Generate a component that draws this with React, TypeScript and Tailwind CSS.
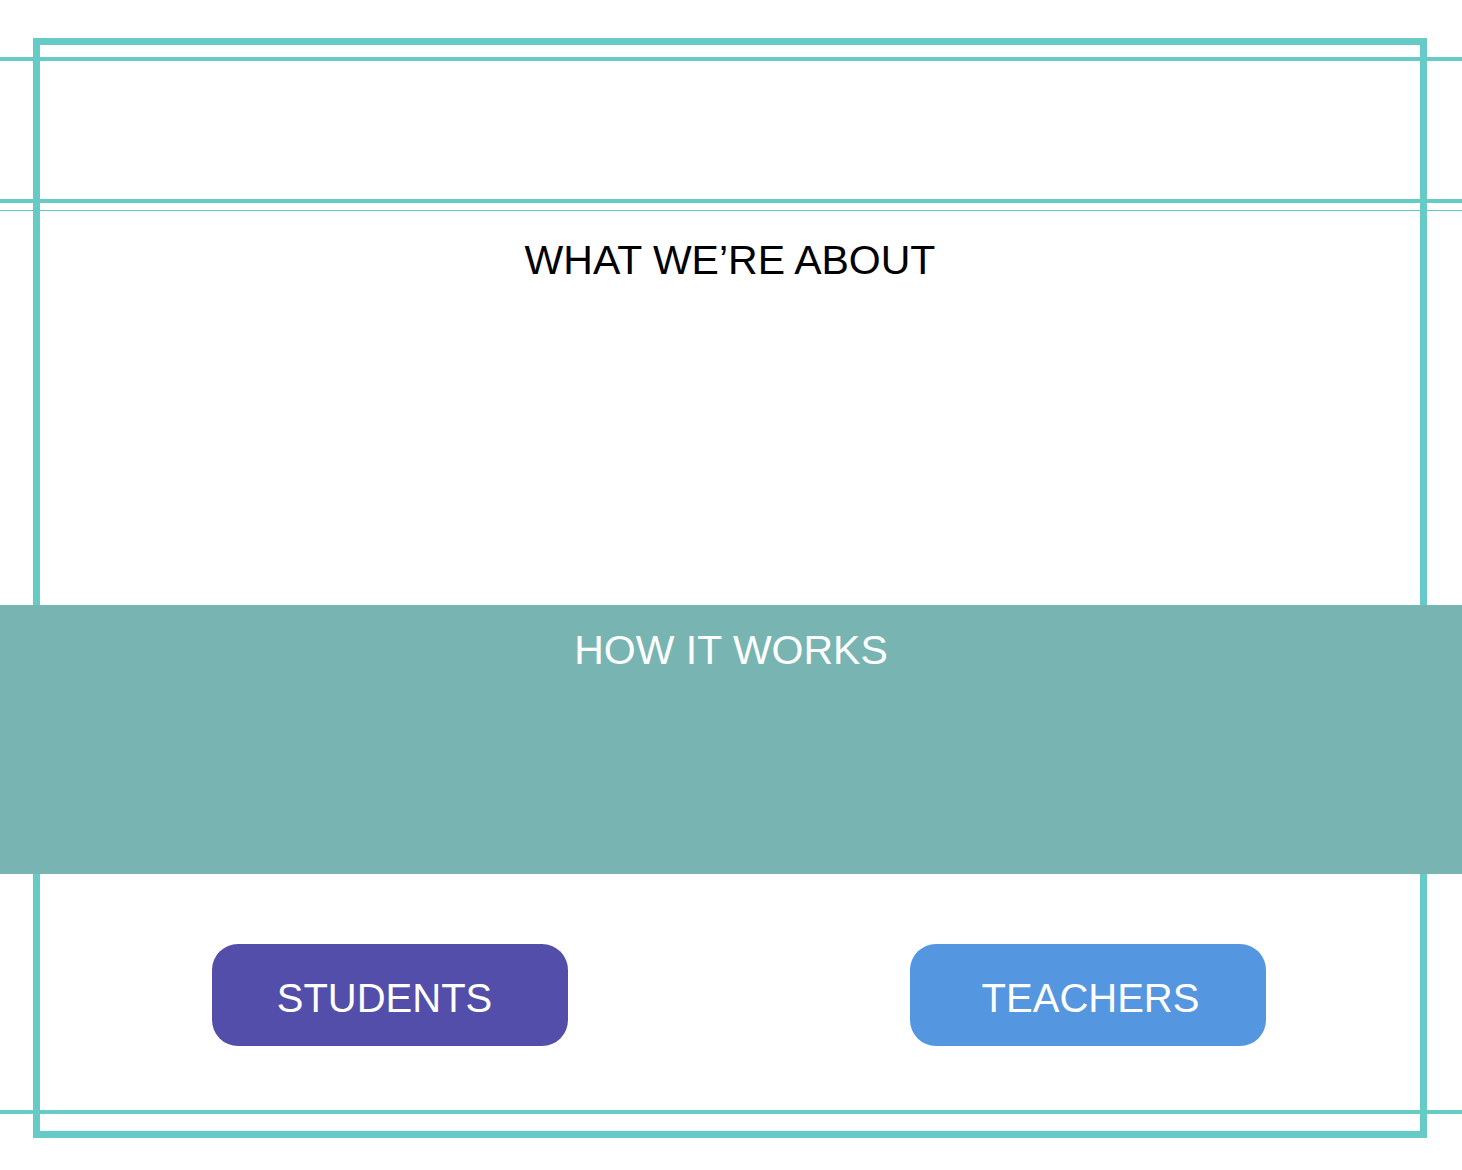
export default function App() {
  return (
    <div className="min-h-[1170px] bg-white pl-[33px] pr-[35px] pt-[38px] font-['Liberation_Sans',Arial,sans-serif]">
      <div className="h-[1100px] border-[7px] border-[#66cac7]">
        <div className="-ml-[40px] -mr-[42px] mt-[12px] h-[4px] bg-[#66cac7]" />
        <div className="-ml-[40px] -mr-[42px] mt-[138px] h-[4px] bg-[#66cac7]" />
        <div className="-ml-[40px] -mr-[42px] mt-[7px] h-[1px] bg-[#66cac7]" />

        <h1 className="mt-[29px] text-center text-[41px] font-normal leading-[41px] text-black">WHAT WE’RE ABOUT</h1>

        <section className="-ml-[40px] -mr-[42px] mt-[324px] h-[269px] bg-[#78b5b2] pt-[25px]">
          <h2 className="text-center text-[41px] font-normal leading-[41px] text-white">HOW IT WORKS</h2>
        </section>

        <div className="ml-[172px] mt-[70px] flex gap-[342px]">
          <button className="h-[102px] w-[356px] rounded-[26px] bg-[#534ea9] pb-[28px] pr-[11px] pt-[34px] text-[40px] leading-[40px] text-white">
            STUDENTS
          </button>
          <button className="h-[102px] w-[356px] rounded-[26px] bg-[#5496df] pb-[28px] pl-[5px] pt-[34px] text-[40px] leading-[40px] text-white">
            TEACHERS
          </button>
        </div>

        <div className="-ml-[40px] -mr-[42px] mt-[64px] h-[4px] bg-[#66cac7]" />
      </div>
    </div>
  )
}
